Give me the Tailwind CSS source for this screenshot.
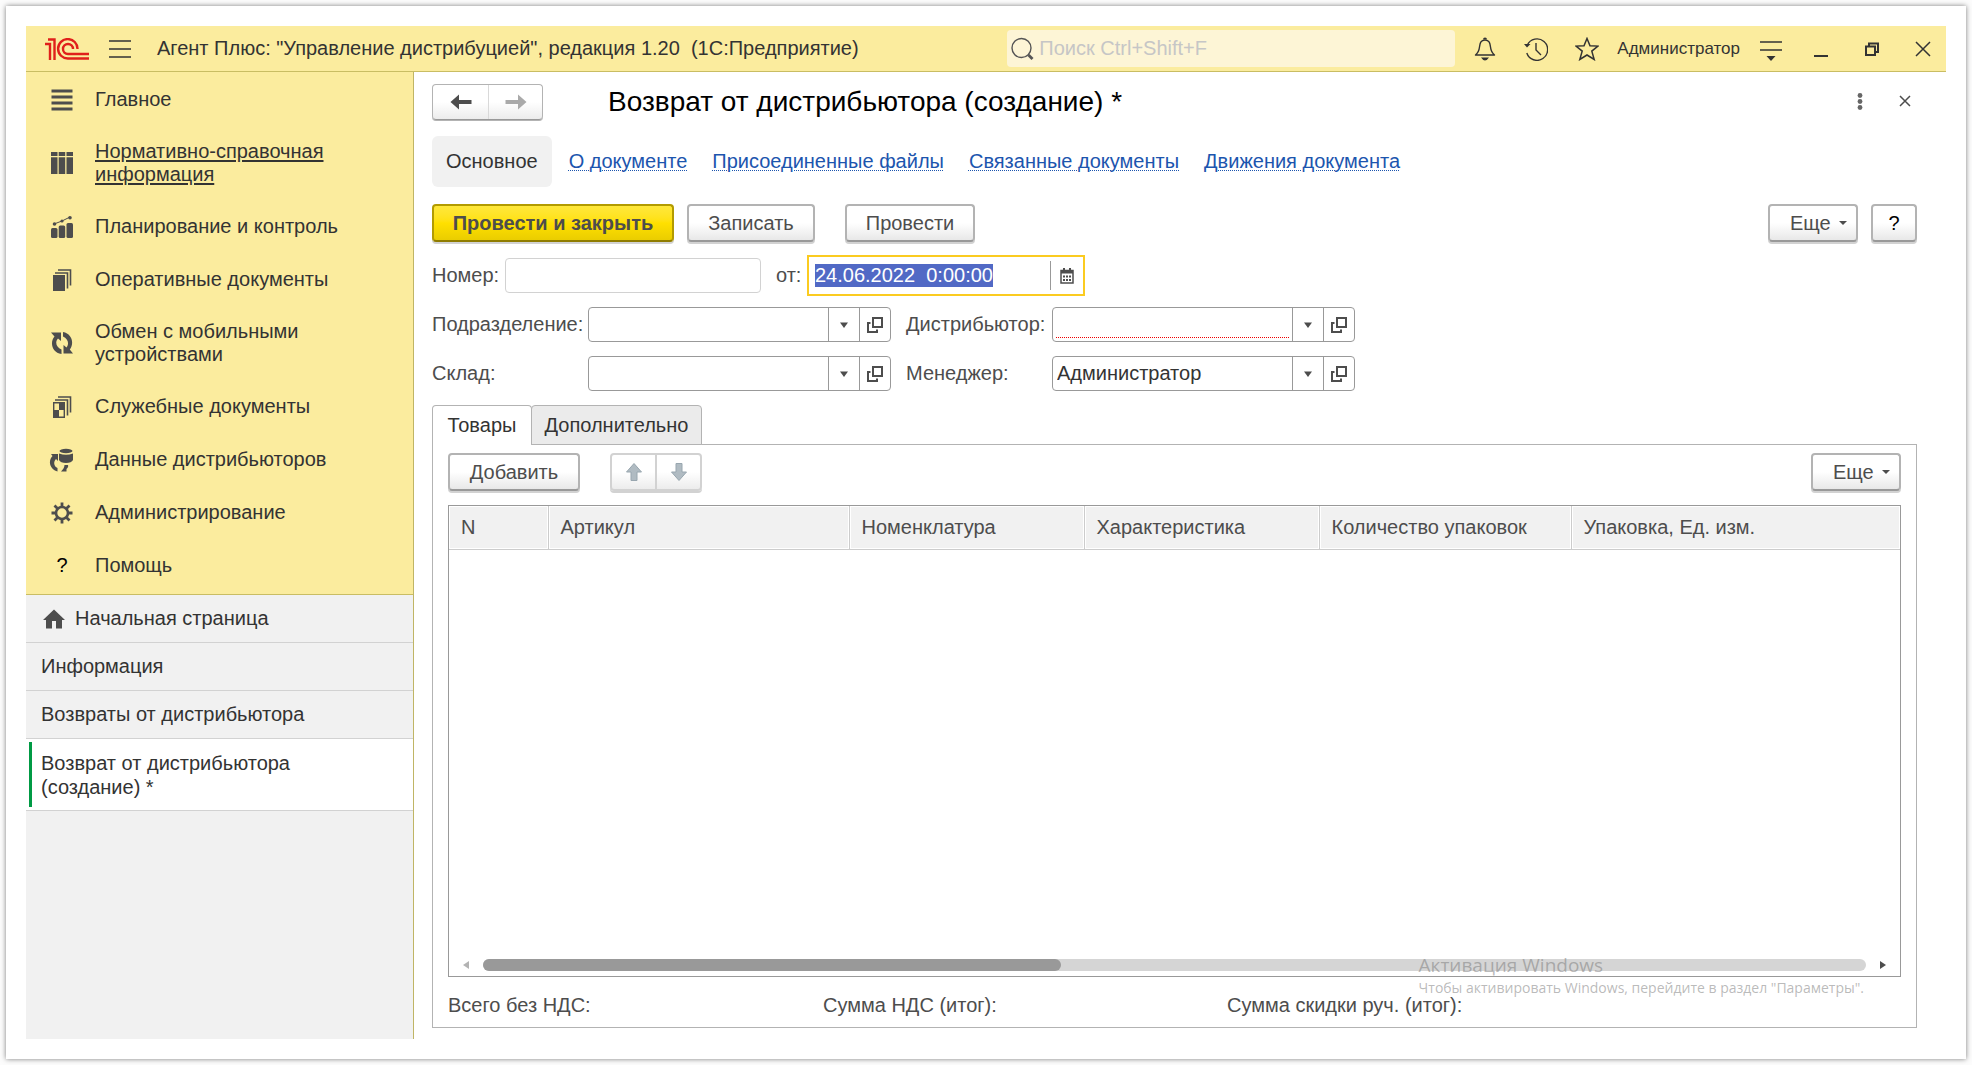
<!DOCTYPE html>
<html lang="ru">
	<head>
		<meta charset="UTF-8" />
		<meta name="viewport" content="width=device-width, initial-scale=1.0" />
		<title>Возврат от дистрибьютора (создание) *</title>
		<script src="https://cdn.jsdelivr.net/npm/@tailwindcss/browser@4"></script>
	</head>
	<body class="h-screen min-h-[800px] bg-[#fcfcfc] p-1.5 font-['Liberation_Sans',Arial,sans-serif] text-[20px] leading-[23px] text-[#4d4d4d]">
		<!-- shared icons -->
		<svg class="hidden">
			<symbol id="caret" viewBox="0 0 8 6"><path d="M0 0.5h8L4 6z" fill="currentColor" /></symbol>
			<symbol id="more" viewBox="0 0 8 4"><path d="M0 0h8L4 4z" fill="currentColor" /></symbol>
			<symbol id="open" viewBox="0 0 16 16"><path d="M6 1h9v9H6zM3.500 6H1v9h9v-2.500" fill="none" stroke="currentColor" stroke-width="2" /></symbol>
		</svg>

		<div class="flex h-full flex-col bg-white p-5 shadow-[0_0_5px_rgba(0,0,0,0.5)]">
			<header class="flex h-[46px] shrink-0 items-center border-b border-[#c9bd63] bg-[#fbec9e] pl-[19px] text-[#333]">
				<svg class="h-[22px] w-[44px] shrink-0" viewBox="0 0 44 22" fill="none" stroke="#e0201b" stroke-width="2.400">
					<path d="M0 6h5V22M3 1.500h6.500V22" />
					<path d="M32.500 11A9.700 9.700 0 1 0 23 20.500h21M28 11A5 5 0 1 0 23 16h21" />
				</svg>
				<button class="ml-5 shrink-0" aria-label="Меню">
					<svg class="h-[18px] w-[22px]" viewBox="0 0 22 18"><path d="M0 1h22M0 9h22M0 17h22" stroke="#333" stroke-width="1.300" /></svg>
				</button>
				<span class="ml-[26px] whitespace-pre">Агент Плюс: "Управление дистрибуцией", редакция 1.20  (1С:Предприятие)</span>
				<label class="ml-auto flex h-[37px] w-[448px] items-center gap-1 rounded-sm bg-[#fdf5d6] pl-1">
					<svg class="h-6 w-6 shrink-0" viewBox="0 0 24 24" fill="none" stroke="#555">
						<circle cx="10.500" cy="11" r="9.500" stroke-width="1.400" />
						<path d="M17.500 18l4 4" stroke-width="2.800" />
					</svg>
					<input type="search" aria-label="Поиск" placeholder="Поиск Ctrl+Shift+F" class="min-w-0 flex-1 bg-transparent outline-none placeholder:text-[#c6c6c6]" />
				</label>
				<div class="ml-[18px] flex items-center gap-[27px]">
					<button aria-label="Оповещения">
						<svg class="h-6 w-6" viewBox="0 0 24 24">
							<path d="M12 3c-4.500 0-5 3.500-5.500 7-.4 3.500-1.500 6-4 8h19c-2.500-2-3.600-4.500-4-8C17 6.500 16.500 3 12 3z" fill="none" stroke="#333" stroke-width="1.400" stroke-linejoin="round" />
							<path d="M10 2.500a2 2 0 0 1 4 0zM8 20.500h8q-2 3-4 3t-4-3z" fill="#333" />
						</svg>
					</button>
					<button aria-label="История">
						<svg class="h-6 w-6" viewBox="0 0 24 24" fill="none" stroke="#333" stroke-width="1.400">
							<path d="M3.300 8A10.700 10.700 0 1 1 2.800 16" />
							<path d="M12 6v7l5 5" />
							<path d="M0 7h6.500L3 10.500z" fill="#333" stroke="none" />
						</svg>
					</button>
					<button aria-label="Избранное">
						<svg class="h-6 w-6" viewBox="0 0 24 24"><path d="M12 1.500l3 7.300 8 .3-6.200 5 2.400 8.400L12 18l-7.200 4.500 2.400-8.400L1 9.100l8-.3z" fill="none" stroke="#333" stroke-width="1.500" /></svg>
					</button>
				</div>
				<a href="#" class="ml-[18px] text-[17px]">Администратор</a>
				<div class="flex items-center gap-[27px] pr-[11px] pl-5">
					<button aria-label="Настройки">
						<svg class="h-6 w-[22px]" viewBox="0 0 22 24"><path d="M0 5h22M0 13h22" stroke="#333" stroke-width="1.500" /><path d="M6.500 19h9L11 24z" fill="#333" /></svg>
					</button>
					<button aria-label="Свернуть">
						<svg class="h-6 w-6" viewBox="0 0 24 24"><path d="M5 19h14" stroke="#333" stroke-width="2" /></svg>
					</button>
					<button aria-label="Развернуть">
						<svg class="h-6 w-6" viewBox="0 0 24 24"><path d="M6 9.500h9v8.500H6zM9 9V6.500h9V15h-2.500" fill="none" stroke="#333" stroke-width="2" /></svg>
					</button>
					<button aria-label="Закрыть">
						<svg class="h-6 w-6" viewBox="0 0 24 24"><path d="M5 5l14 14M19 5L5 19" stroke="#333" stroke-width="1.500" /></svg>
					</button>
				</div>
			</header>

			<div class="flex min-h-0 flex-1">
				<aside class="flex w-[388px] shrink-0 flex-col border-r border-[#c0b565] bg-[#f1f1f1] text-[#333]">
					<nav class="border-b border-[#c9bd63] bg-[#fbec9e] pt-px pb-0.5">
						<a href="#" class="flex items-center gap-[22px] py-[15px] pl-[25px]">
							<svg class="h-[22px] w-[22px] shrink-0" viewBox="0 0 22 22"><path d="M0.500 2h21M0.500 8h21M0.500 14h21M0.500 20h21" stroke="#4d4d4d" stroke-width="3" /></svg>
							Главное
						</a>
						<a href="#" class="flex items-center gap-[22px] py-3.5 pl-[25px] underline underline-offset-2">
							<svg class="h-[22px] w-[22px] shrink-0" viewBox="0 0 22 22" fill="#4d4d4d"><path d="M0 0h6.500v4H0zM7.700 0h6.500v4H7.700zM15.500 0H22v4h-6.500zM0 5.200h6.500V22H0zM7.700 5.200h6.500V22H7.700zM15.500 5.200H22V22h-6.500z" /></svg>
							<span>Нормативно-справочная<br />информация</span>
						</a>
						<a href="#" class="flex items-center gap-[22px] py-[15px] pl-[25px]">
							<svg class="h-[22px] w-[22px] shrink-0" viewBox="0 0 22 22" fill="#4d4d4d">
								<rect x="0" y="12" width="6.500" height="10" rx="1.500" /><rect x="7.700" y="9.500" width="6.500" height="12.500" rx="1.500" /><rect x="15.500" y="7" width="6.500" height="15" rx="1.500" />
								<path d="M3 8l8-3 8-4" fill="none" stroke="#4d4d4d" />
								<circle cx="3.500" cy="8" r="1.800" /><circle cx="11" cy="5" r="1.600" /><circle cx="19" cy="1.800" r="1.800" />
							</svg>
							Планирование и контроль
						</a>
						<a href="#" class="flex items-center gap-[22px] py-[15px] pl-[25px]">
							<svg class="h-[22px] w-[22px] shrink-0" viewBox="0 0 22 22" fill="#4d4d4d">
								<path d="M2 6h12v16H2z" />
								<path d="M4 4h12.500v15.500M7 1h12.500v15.500" fill="none" stroke="#4d4d4d" stroke-width="1.600" />
							</svg>
							Оперативные документы
						</a>
						<a href="#" class="flex items-center gap-[22px] py-3.5 pl-[25px]">
							<svg class="h-[22px] w-[22px] shrink-0" viewBox="0 0 22 22" fill="#4d4d4d">
								<path d="M0 0.500h10V9L7 6.500C3.800 10 5 15.500 10.500 17.500V22C1 20.500 -1.500 10.500 3.500 4.500z" />
								<path d="M22 21.500H12.500V13l3 2.500C18.500 12 17 6.500 12 4.500V0C21 1.500 23.500 11.500 18.800 17.500z" />
							</svg>
							<span>Обмен с мобильными<br />устройствами</span>
						</a>
						<a href="#" class="flex items-center gap-[22px] py-[15px] pl-[25px]">
							<svg class="h-[22px] w-[22px] shrink-0" viewBox="0 0 22 22" fill="#4d4d4d">
								<path d="M2.700 6.700h10.600v14.600H2.700z" fill="#fbec9e" stroke="#4d4d4d" stroke-width="1.400" />
								<path d="M8 7h5v7H8zM3 14h5v7H3z" />
								<path d="M4 4h12.500v15.500M7 1h12.500v15.500" fill="none" stroke="#4d4d4d" stroke-width="1.600" />
							</svg>
							Служебные документы
						</a>
						<a href="#" class="flex items-center gap-[22px] py-[15px] pl-[25px]">
							<svg class="h-[22px] w-[22px] shrink-0 overflow-visible" viewBox="0 0 22 22" fill="#4d4d4d">
								<ellipse cx="15" cy="2" rx="6.500" ry="2.200" />
								<path d="M8 4.500q7 2.500 14 0V11q-1.500 3-7 3t-7-3z" />
								<path d="M0 5h7v7L5 10C2 13 3 17.500 6.500 19v3.500C-1 20.500 -3.500 12 1.500 7zM10 22.500h5.500v-2.500c1.500-1 2-3 1.500-4h-3.500q0 3-3.500 6.500z" />
							</svg>
							Данные дистрибьюторов
						</a>
						<a href="#" class="flex items-center gap-[22px] py-[15px] pl-[25px]">
							<svg class="h-[22px] w-[22px] shrink-0" viewBox="0 0 22 22" fill="none" stroke="#4d4d4d">
								<circle cx="11" cy="11" r="6" stroke-width="2.600" />
								<path d="M11 0.500V5M11 17v4.500M0.500 11H5M17 11h4.500M3.500 3.500l3 3M15.500 15.500l3 3M18.500 3.500l-3 3M6.500 15.500l-3 3" stroke-width="2.800" />
							</svg>
							Администрирование
						</a>
						<a href="#" class="flex items-center gap-[22px] py-[15px] pl-[25px]">
							<span class="w-[22px] shrink-0 text-center text-black">?</span>
							Помощь
						</a>
					</nav>
					<nav>
						<a href="#" class="flex items-center gap-2.5 border-b border-[#d2d2d2] py-3 pl-[17px]">
							<svg class="h-5 w-[22px]" viewBox="0 0 22 20"><path d="M11 0.500L22 11h-3v8.500h-6V12H9v7.500H3V11H0z" fill="#4d4d4d" /></svg>
							Начальная страница
						</a>
						<a href="#" class="block border-b border-[#d2d2d2] py-3 pl-[15px]">Информация</a>
						<a href="#" class="block border-b border-[#d2d2d2] py-3 pl-[15px]">Возвраты от дистрибьютора</a>
						<a href="#" class="flex border-b border-[#d2d2d2] bg-white py-[3px] pl-[3px]">
							<span class="border-l-3 border-[#009a44] pt-[9px] pb-2 pl-[9px] leading-6">Возврат от дистрибьютора<br />(создание) *</span>
						</a>
					</nav>
				</aside>

				<main class="flex min-w-0 flex-1 flex-col pt-3 pr-[29px] pb-[11px] pl-[18px]">
					<div class="flex h-9 items-center">
						<div class="flex h-full rounded border border-[#b3b3b3] border-b-[#999] bg-linear-to-b from-white from-50% to-[#ececec] shadow-[0_1px_0_#b3b3b3]">
							<button class="flex w-[55px] items-center justify-center" aria-label="Назад">
								<svg class="h-4 w-[22px]" viewBox="0 0 22 16"><path d="M0.500 8L9 0.500V6h12.500v4H9v5.500z" fill="#4d4d4d" /></svg>
							</button>
							<button class="flex w-[54px] items-center justify-center border-l border-[#d9d9d9]" aria-label="Вперед">
								<svg class="h-4 w-[22px]" viewBox="0 0 22 16"><path d="M21.500 8L13 0.500V6H0.500v4H13v5.500z" fill="#aaa" /></svg>
							</button>
						</div>
						<h1 class="ml-[65px] text-[28px] leading-9 text-black">Возврат от дистрибьютора (создание) *</h1>
						<button class="ml-auto" aria-label="Ещё действия">
							<svg class="h-[18px] w-6" viewBox="0 0 24 18" fill="#666"><circle cx="12" cy="2.500" r="2.400" /><circle cx="12" cy="8.500" r="2.400" /><circle cx="12" cy="14.500" r="2.400" /></svg>
						</button>
						<button class="ml-[21px]" aria-label="Закрыть форму">
							<svg class="h-6 w-6" viewBox="0 0 24 24"><path d="M7 6l10 10M17 6L7 16" stroke="#4d4d4d" stroke-width="1.500" /></svg>
						</button>
					</div>

					<nav class="mt-4 flex h-[51px] items-center gap-[25px] text-[#1c55ae]">
						<a href="#" class="-mr-2 flex h-full items-center rounded-md bg-[#f1f1f1] px-3.5 text-[#333]">Основное</a>
						<a href="#" class="underline decoration-dotted decoration-1 underline-offset-2">О документе</a>
						<a href="#" class="underline decoration-dotted decoration-1 underline-offset-2">Присоединенные файлы</a>
						<a href="#" class="underline decoration-dotted decoration-1 underline-offset-2">Связанные документы</a>
						<a href="#" class="underline decoration-dotted decoration-1 underline-offset-2">Движения документа</a>
					</nav>

					<div class="mt-[17px] flex h-[38px]">
						<button class="w-[242px] rounded border-2 border-[#b39b00] border-b-[#8f7c00] bg-linear-to-b from-[#ffe83a] via-[#ffe000] to-[#eacd00] font-bold text-[#4d4d4d] shadow-[0_2px_0_#d2d2d2]">Провести и закрыть</button>
						<button class="ml-[13px] w-32 rounded border-2 border-[#b3b3b3] border-b-[#999] bg-linear-to-b from-white from-50% to-[#e8e8e8] shadow-[0_2px_0_#d2d2d2]">Записать</button>
						<button class="ml-[30px] w-[130px] rounded border-2 border-[#b3b3b3] border-b-[#999] bg-linear-to-b from-white from-50% to-[#e8e8e8] shadow-[0_2px_0_#d2d2d2]">Провести</button>
						<button class="ml-auto flex w-[90px] items-center gap-2 rounded border-2 border-[#b3b3b3] border-b-[#999] bg-linear-to-b from-white from-50% to-[#e8e8e8] pl-5 shadow-[0_2px_0_#d2d2d2]">Еще <svg class="h-1 w-2"><use href="#more" /></svg></button>
						<button class="ml-[13px] w-[46px] rounded border-2 border-[#b3b3b3] border-b-[#999] bg-linear-to-b from-white from-50% to-[#e8e8e8] text-black shadow-[0_2px_0_#d2d2d2]">?</button>
					</div>

					<div class="mt-[13px] flex h-[41px] items-center">
						<label for="number" class="w-[73px]">Номер:</label>
						<input id="number" type="text" class="h-[35px] w-[256px] rounded border border-[#d2d2d2] px-1 outline-none" />
						<label for="date" class="ml-[15px] w-[31px]">от:</label>
						<div class="flex h-full w-[278px] items-center border-2 border-[#fbcb20] py-1">
							<input id="date" type="text" value="24.06.2022  0:00:00" autofocus class="min-w-0 flex-1 pl-1.5 text-[#333] outline-none selection:bg-[#5169c5] selection:text-white" />
							<button class="flex h-full w-[33px] items-center justify-center border-l border-[#999]" aria-label="Выбрать дату">
								<svg class="h-4 w-3.5" viewBox="0 0 14 16">
									<path d="M1 2.500h12v12.500H1z" fill="none" stroke="#4d4d4d" stroke-width="1.500" />
									<path d="M1 2h12v3.500H1zM3 0h2v3H3zM9 0h2v3H9zM3 7.500h2v2H3zM6 7.500h2v2H6zM9 7.500h2v2H9zM3 11h2v2H3zM6 11h2v2H6zM9 11h2v2H9z" fill="#4d4d4d" />
								</svg>
							</button>
						</div>
					</div>

					<div class="mt-[11px] grid grid-cols-[156px_303px_161px_303px] gap-y-3.5">
						<label for="department" class="self-center">Подразделение:</label>
						<div class="flex h-[35px] rounded border border-[#999]">
							<input id="department" type="text" class="min-w-0 flex-1 px-1 outline-none" />
							<button class="flex w-[31px] items-center justify-center border-l border-[#999]" aria-label="Список"><svg class="h-1.5 w-2"><use href="#caret" /></svg></button>
							<button class="flex w-[31px] items-center justify-center border-l border-[#999]" aria-label="Открыть"><svg class="h-4 w-4"><use href="#open" /></svg></button>
						</div>
						<label for="distributor" class="self-center pl-[15px]">Дистрибьютор:</label>
						<div class="flex h-[35px] rounded border border-[#999]">
							<input id="distributor" type="text" class="mx-[3px] mb-[3px] min-w-0 flex-1 border-b border-dotted border-[#e00] outline-none" />
							<button class="flex w-[31px] items-center justify-center border-l border-[#999]" aria-label="Список"><svg class="h-1.5 w-2"><use href="#caret" /></svg></button>
							<button class="flex w-[31px] items-center justify-center border-l border-[#999]" aria-label="Открыть"><svg class="h-4 w-4"><use href="#open" /></svg></button>
						</div>
						<label for="warehouse" class="self-center">Склад:</label>
						<div class="flex h-[35px] rounded border border-[#999]">
							<input id="warehouse" type="text" class="min-w-0 flex-1 px-1 outline-none" />
							<button class="flex w-[31px] items-center justify-center border-l border-[#999]" aria-label="Список"><svg class="h-1.5 w-2"><use href="#caret" /></svg></button>
							<button class="flex w-[31px] items-center justify-center border-l border-[#999]" aria-label="Открыть"><svg class="h-4 w-4"><use href="#open" /></svg></button>
						</div>
						<label for="manager" class="self-center pl-[15px]">Менеджер:</label>
						<div class="flex h-[35px] rounded border border-[#999]">
							<input id="manager" type="text" value="Администратор" class="min-w-0 flex-1 px-1 text-[#333] outline-none" />
							<button class="flex w-[31px] items-center justify-center border-l border-[#999]" aria-label="Список"><svg class="h-1.5 w-2"><use href="#caret" /></svg></button>
							<button class="flex w-[31px] items-center justify-center border-l border-[#999]" aria-label="Открыть"><svg class="h-4 w-4"><use href="#open" /></svg></button>
						</div>
					</div>

					<div class="relative z-10 mt-3.5 -mb-px flex h-10 text-[#333]" role="tablist">
						<button class="w-[100px] rounded-t border border-b-0 border-[#b3b3b3] bg-white" role="tab" aria-selected="true">Товары</button>
						<button class="-ml-px w-[171px] rounded-t border border-[#b3b3b3] bg-[#ebebeb]" role="tab" aria-selected="false">Дополнительно</button>
					</div>
					<section class="flex min-h-0 flex-1 flex-col border border-[#b3b3b3] px-[15px] pt-2">
						<div class="flex h-[38px] shrink-0">
							<button class="w-[132px] rounded border-2 border-[#b3b3b3] border-b-[#999] bg-linear-to-b from-white from-50% to-[#e8e8e8] shadow-[0_2px_0_#d2d2d2]">Добавить</button>
							<div class="ml-[30px] flex w-[92px] rounded border-2 border-[#d2d2d2] bg-linear-to-b from-white from-50% to-[#ececec] shadow-[0_2px_0_#d2d2d2]">
								<button class="flex flex-1 items-center justify-center" aria-label="Вверх" disabled>
									<svg class="h-[18px] w-4" viewBox="0 0 16 18"><path d="M8 0.500L15.500 9H11v8.500H5V9H0.500z" fill="#b0bbc2" stroke="#98a6af" /></svg>
								</button>
								<button class="flex flex-1 items-center justify-center border-l-2 border-[#d2d2d2]" aria-label="Вниз" disabled>
									<svg class="h-[18px] w-4" viewBox="0 0 16 18"><path d="M8 17.500L15.500 9H11V0.500H5V9H0.500z" fill="#b0bbc2" stroke="#98a6af" /></svg>
								</button>
							</div>
							<button class="ml-auto flex w-[90px] items-center gap-2 rounded border-2 border-[#b3b3b3] border-b-[#999] bg-linear-to-b from-white from-50% to-[#e8e8e8] pl-5 shadow-[0_2px_0_#d2d2d2]">Еще <svg class="h-1 w-2"><use href="#more" /></svg></button>
						</div>

						<div class="relative mt-3.5 flex min-h-0 flex-1 flex-col border border-[#999]">
							<table class="w-full table-fixed text-left">
								<colgroup>
									<col class="w-[99px]" /><col class="w-[301px]" /><col class="w-[235px]" /><col class="w-[235px]" /><col class="w-[252px]" /><col />
								</colgroup>
								<thead>
									<tr class="h-[43px] bg-[#f1f1f1]">
										<th class="border-r border-b border-[#ccc] pl-3 font-normal shadow-[inset_0_0_0_1px_#fff]">N</th>
										<th class="border-r border-b border-[#ccc] pl-3 font-normal shadow-[inset_0_0_0_1px_#fff]">Артикул</th>
										<th class="border-r border-b border-[#ccc] pl-3 font-normal shadow-[inset_0_0_0_1px_#fff]">Номенклатура</th>
										<th class="border-r border-b border-[#ccc] pl-3 font-normal shadow-[inset_0_0_0_1px_#fff]">Характеристика</th>
										<th class="border-r border-b border-[#ccc] pl-3 font-normal shadow-[inset_0_0_0_1px_#fff]">Количество упаковок</th>
										<th class="border-b border-[#ccc] pl-3 font-normal shadow-[inset_0_0_0_1px_#fff]">Упаковка, Ед. изм.</th>
									</tr>
								</thead>
							</table>
							<div class="mt-auto mb-[5px] flex items-center gap-3.5 px-3.5">
								<svg class="h-2 w-1.5" viewBox="0 0 6 8"><path d="M6 0v8L0 4z" fill="#b3b3b3" /></svg>
								<div class="h-3 flex-1 rounded-full bg-[#d5d5d5]">
									<div class="h-3 rounded-full bg-[#999]" style="width: 41.8%"></div>
								</div>
								<svg class="h-2 w-1.5" viewBox="0 0 6 8"><path d="M0 0v8l6-4z" fill="#4d4d4d" /></svg>
							</div>
							<!-- system watermark over the form -->
							<div class="pointer-events-none absolute right-9 -bottom-[23px] font-['Open_Sans',sans-serif] whitespace-nowrap text-[#808080]/55">
								<p class="text-[19px] leading-6">Активация Windows</p>
								<p class="text-[14px] leading-[22px]">Чтобы активировать Windows, перейдите в раздел "Параметры".</p>
							</div>
						</div>

						<div class="grid h-[50px] shrink-0 grid-cols-[375px_404px_1fr] pt-[17px]">
							<span>Всего без НДС:</span>
							<span>Сумма НДС (итог):</span>
							<span>Сумма скидки руч. (итог):</span>
						</div>
					</section>
				</main>
			</div>
		</div>

		<script>
			const date = document.getElementById('date')
			date.focus()
			date.select()
		</script>
	</body>
</html>
